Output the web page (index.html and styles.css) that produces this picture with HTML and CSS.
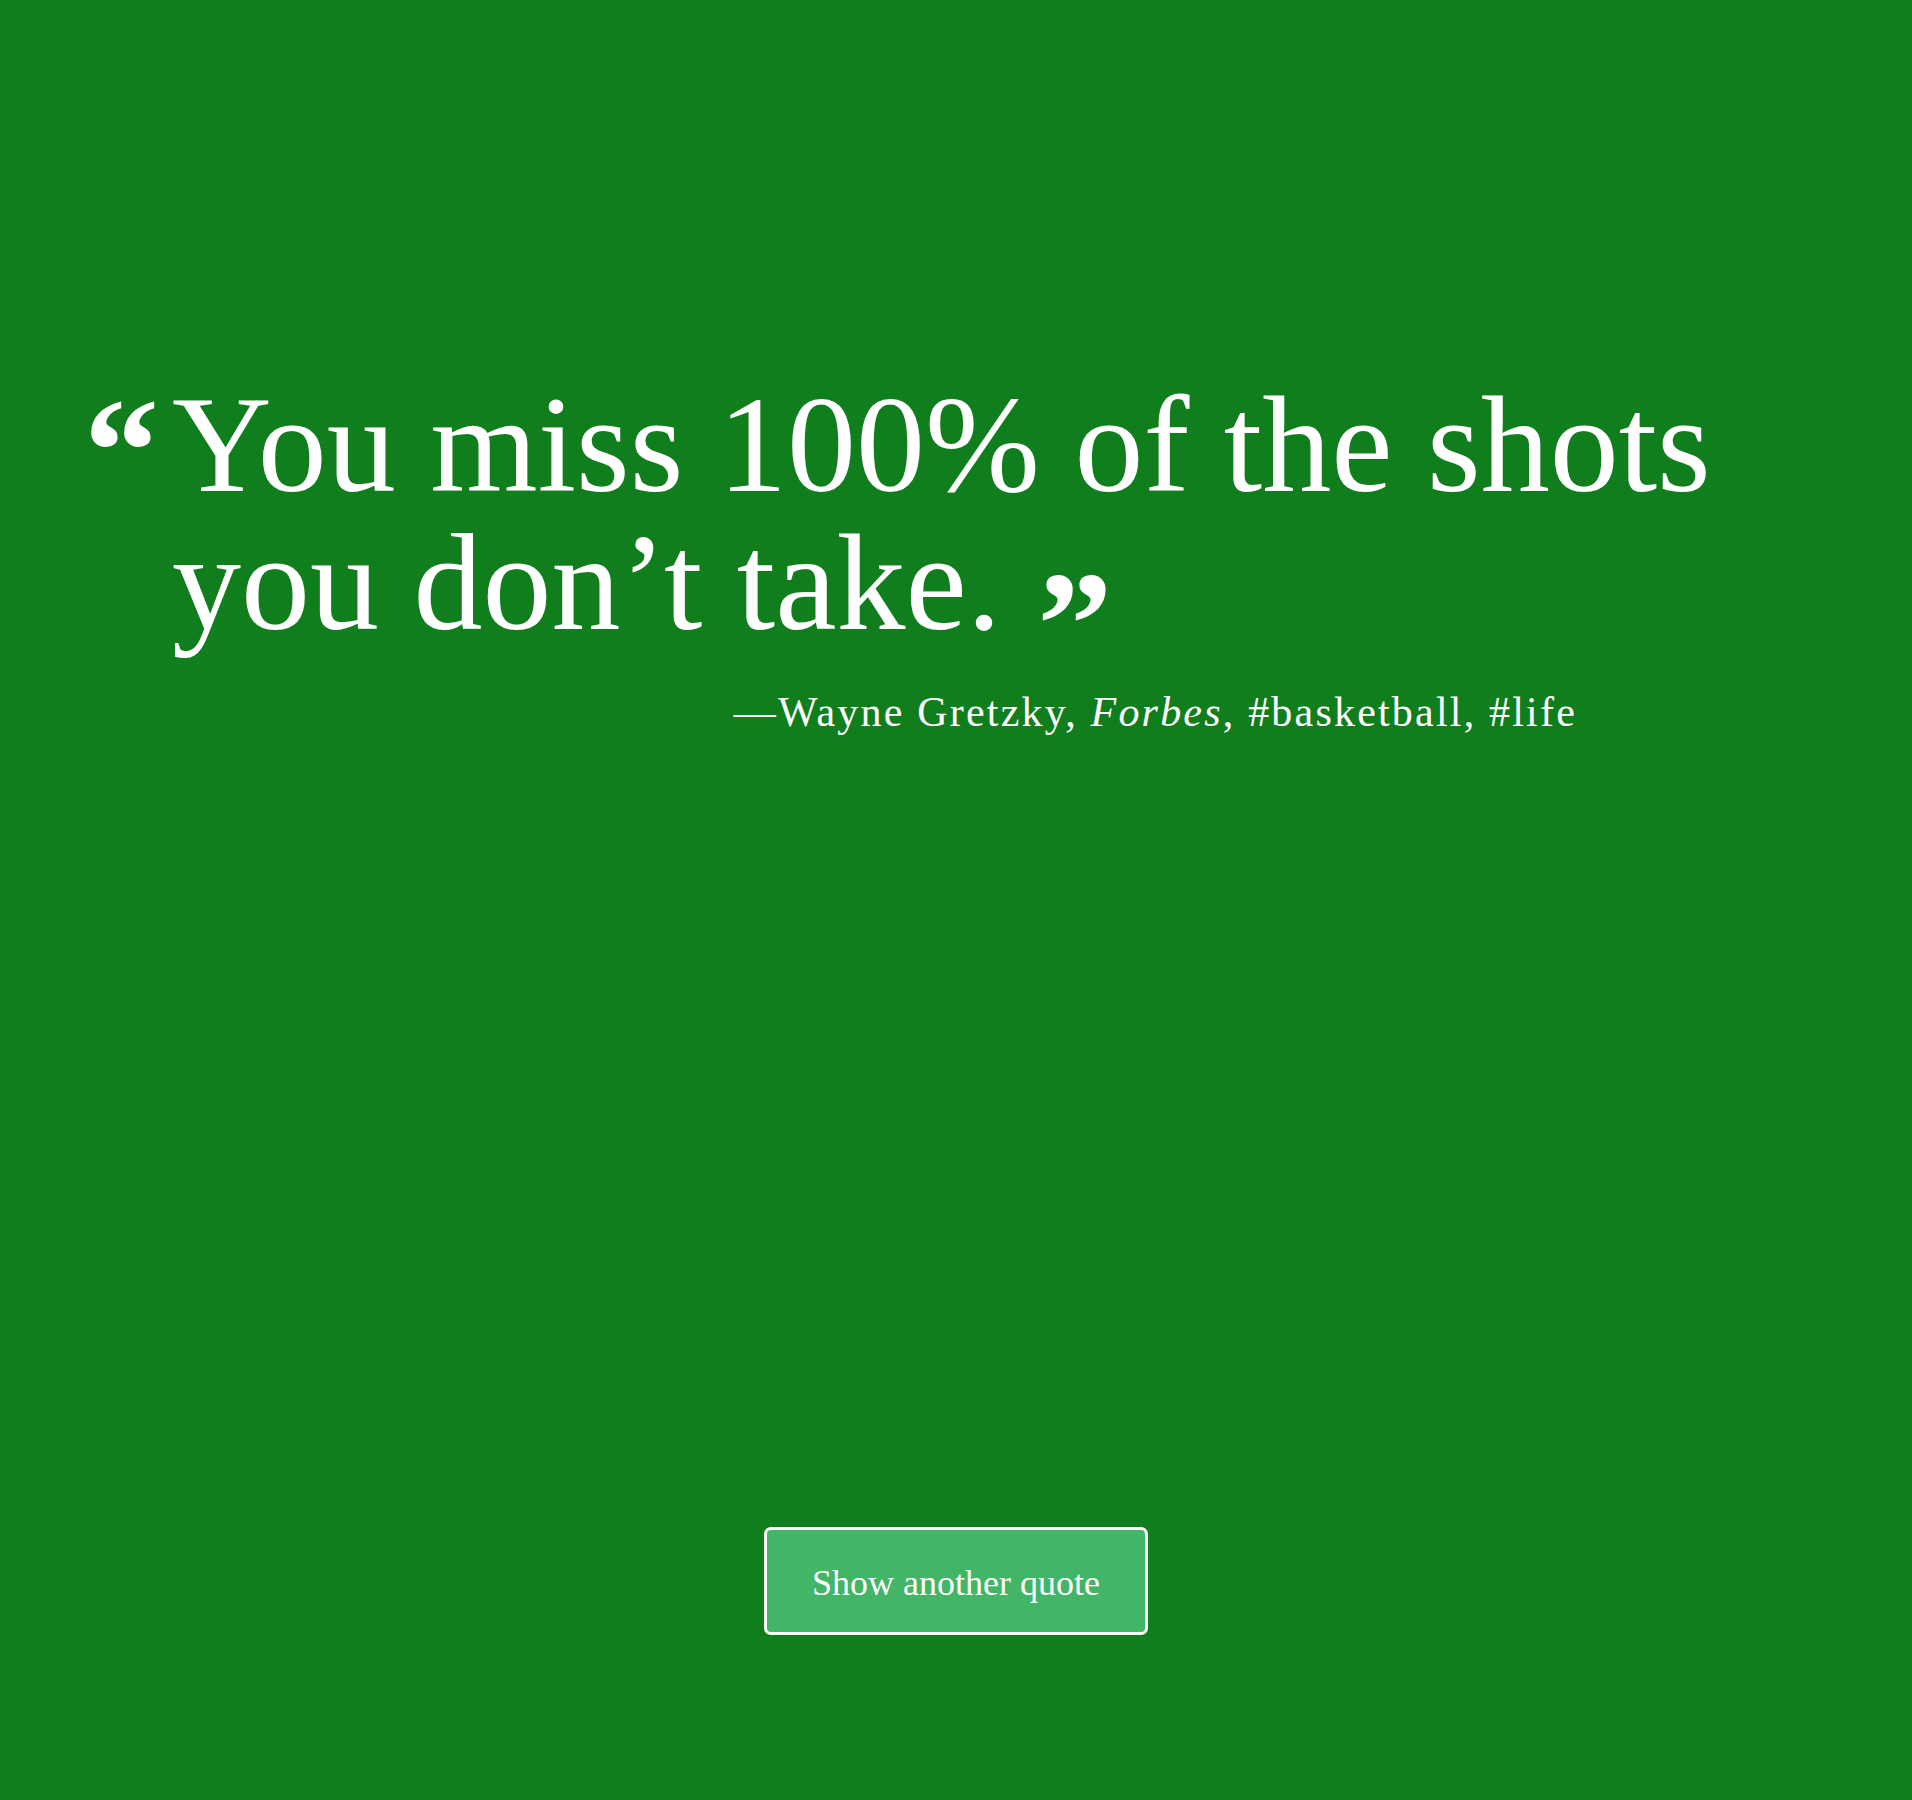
FILE: index.html
```html
<!DOCTYPE html>
<html lang="en">
<head>
<meta charset="utf-8">
<title>Random Quote</title>
<link rel="stylesheet" href="styles.css">
</head>
<body>
<main class="page">
  <figure class="quote-box">
    <blockquote class="quote"><span class="mark-open">“</span>You miss 100% of the shots you don’t take.<span class="mark-close">”</span></blockquote>
    <figcaption class="source">—Wayne Gretzky, <cite>Forbes</cite>, #basketball, #life</figcaption>
  </figure>
  <div class="actions">
    <button class="btn" type="button">Show another quote</button>
  </div>
</main>
</body>
</html>
```

FILE: styles.css
```css
* { box-sizing: border-box; }
html, body { margin: 0; padding: 0; }
body {
  background: #117e1d;
  color: #fff;
  font-family: "Liberation Serif", "Times New Roman", serif;
  min-height: 1800px;
}
.page {
  display: flex;
  flex-direction: column;
  padding-top: 376px;
}
.quote-box {
  margin: 0;
  padding: 0 150px 0 172px;
}
.quote {
  position: relative;
  margin: 0;
  font-size: 138px;
  line-height: 138px;
  max-width: 1560px;
}
.mark-open {
  position: absolute;
  left: -88px;
  top: 0;
  font-size: 150px;
  line-height: 1;
  font-weight: 700;
}
.mark-close {
  font-size: 150px;
  line-height: 0;
  font-weight: 700;
  vertical-align: -46px;
  margin-left: 36px;
}
.source {
  margin-top: 35px;
  display: flex;
  justify-content: flex-end;
  padding-right: 185px;
  font-size: 42px;
  line-height: 50px;
  letter-spacing: 2.2px;
  white-space: pre;
}
.source cite { font-style: italic; }
.actions {
  display: flex;
  justify-content: center;
  margin-top: 790px;
}
.btn {
  width: 384px;
  height: 108px;
  background: #42b566;
  color: #fff;
  border: 3px solid #fff;
  border-radius: 7px;
  font-family: "Liberation Serif", "Times New Roman", serif;
  font-size: 36px;
  padding: 3px 0 0;
}
```
